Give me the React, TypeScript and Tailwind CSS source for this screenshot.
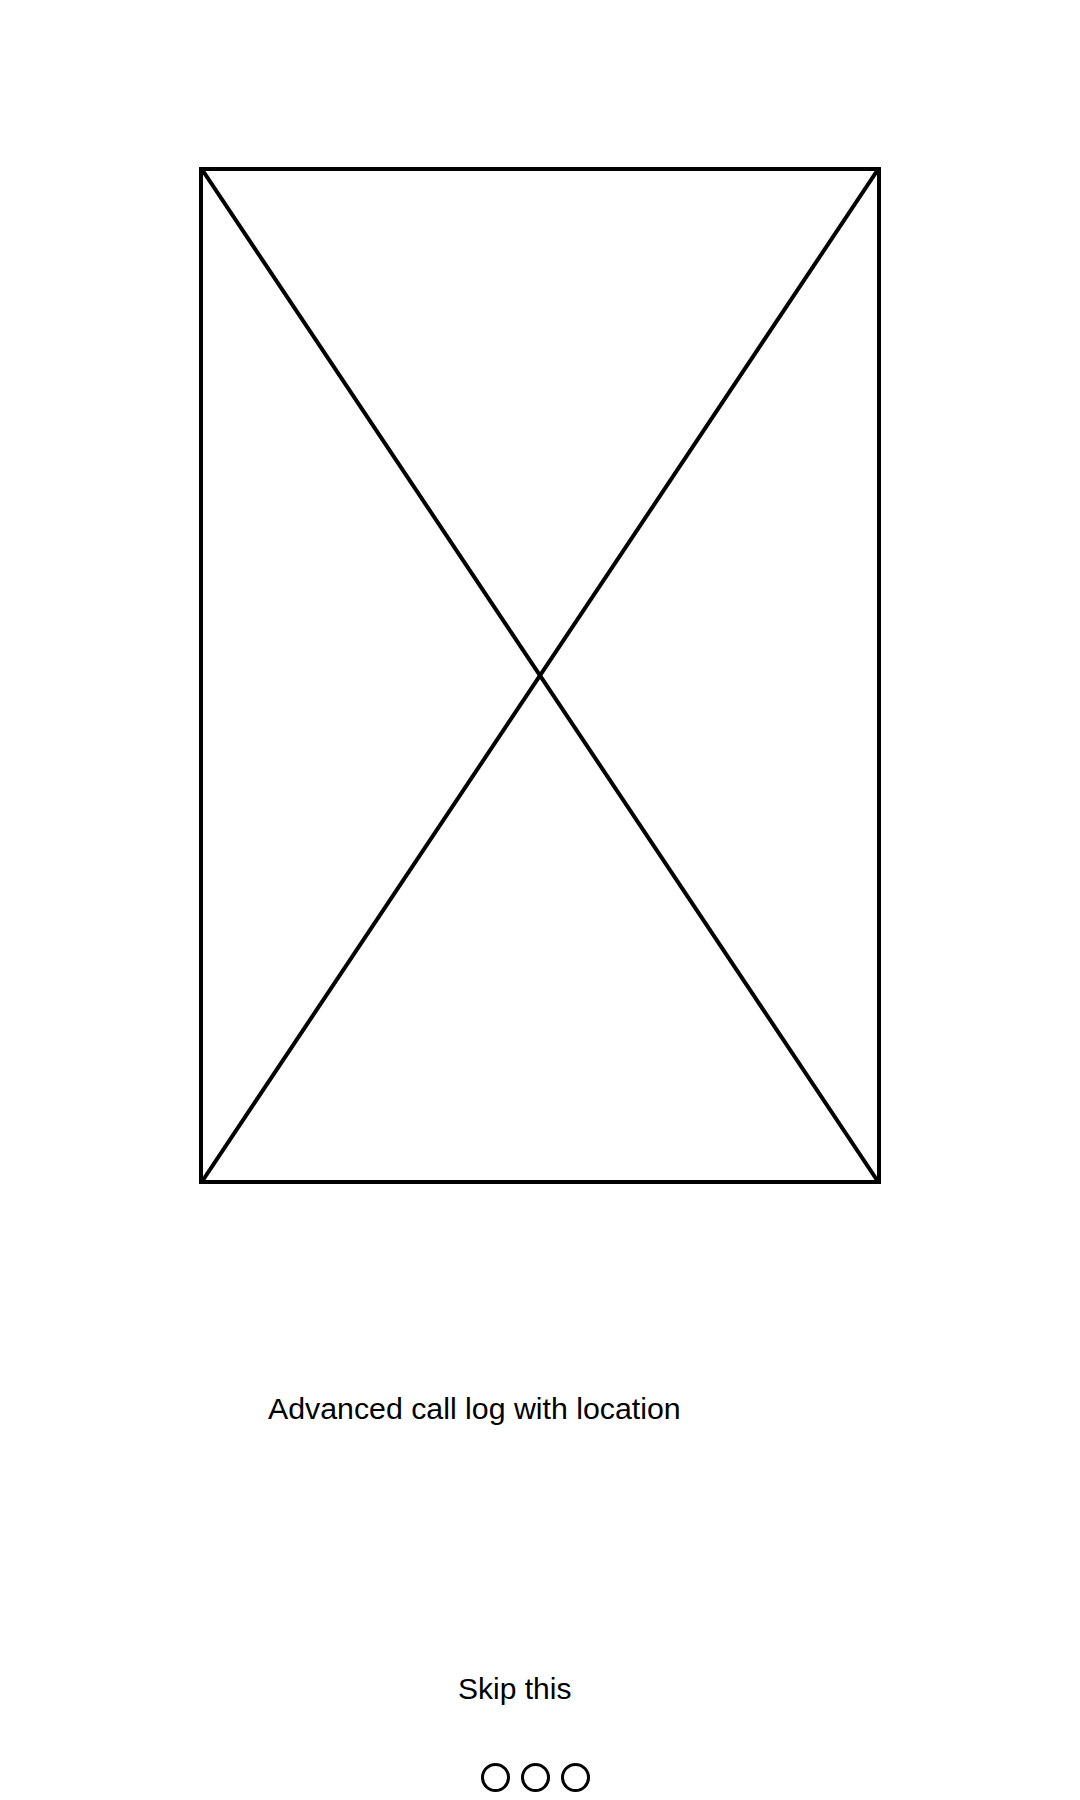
// Onboarding slide with image placeholder
const Placeholder = () => (
  <div className="relative w-[682px] h-[1017px] border-4 border-black">
    <svg
      className="absolute inset-0 w-full h-full"
      viewBox="0 0 674 1009"
      preserveAspectRatio="none"
    >
      <line x1="0" y1="0" x2="674" y2="1009" stroke="#000" strokeWidth="4" />
      <line x1="674" y1="0" x2="0" y2="1009" stroke="#000" strokeWidth="4" />
    </svg>
  </div>
)

export default function App() {
  return (
    <div className="w-[1080px] h-[1800px] bg-white flex flex-col font-['Liberation_Sans',Arial,sans-serif] text-black">
      <div className="flex justify-center mt-[167px]">
        <Placeholder />
      </div>

      <p className="mt-[208px] pl-[268px] text-[30.3px] leading-[34px]">
        Advanced call log with location
      </p>

      <button className="mt-[246px] ml-[458px] self-start text-[30px] leading-[34px]">
        Skip this
      </button>

      <div className="mt-[57px] ml-[481px] flex gap-[11px]">
        <span className="w-[29px] h-[29px] rounded-full border-[3px] border-black" />
        <span className="w-[29px] h-[29px] rounded-full border-[3px] border-black" />
        <span className="w-[29px] h-[29px] rounded-full border-[3px] border-black" />
      </div>
    </div>
  )
}
